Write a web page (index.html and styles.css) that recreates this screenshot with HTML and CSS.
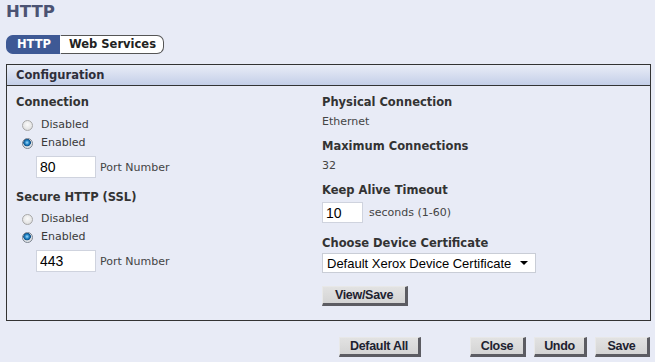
FILE: index.html
```html
<!DOCTYPE html>
<html>
<head>
<meta charset="utf-8">
<link rel="stylesheet" href="styles.css">
</head>
<body>
<h1 class="title">HTTP</h1>
<div class="tabs">
  <span class="tab tab-active">HTTP</span>
  <span class="tab tab-plain">Web Services</span>
</div>
<div class="panel">
  <div class="panel-head">Configuration</div>
  <div class="panel-body">
    <div class="col col-left">
      <div class="label">Connection</div>
      <div class="radios">
        <label class="radio-row"><input type="radio" name="c1" class="radio"><span>Disabled</span></label>
        <label class="radio-row"><input type="radio" name="c1" class="radio" checked><span>Enabled</span></label>
      </div>
      <div class="field-row"><input class="text-in port" type="text" value="80"><span class="hint">Port Number</span></div>
      <div class="label label-gap">Secure HTTP (SSL)</div>
      <div class="radios radios-2">
        <label class="radio-row"><input type="radio" name="c2" class="radio"><span>Disabled</span></label>
        <label class="radio-row"><input type="radio" name="c2" class="radio" checked><span>Enabled</span></label>
      </div>
      <div class="field-row"><input class="text-in port" type="text" value="443"><span class="hint">Port Number</span></div>
    </div>
    <div class="col col-right">
      <div class="label">Physical Connection</div>
      <div class="value">Ethernet</div>
      <div class="label label-r">Maximum Connections</div>
      <div class="value">32</div>
      <div class="label label-r">Keep Alive Timeout</div>
      <div class="field-row field-r"><input class="text-in secs" type="text" value="10"><span class="hint hint-r">seconds (1-60)</span></div>
      <div class="label label-r2">Choose Device Certificate</div>
      <div class="select-wrap">
        <select class="select"><option>Default Xerox Device Certificate</option></select>
        <svg class="arrow" width="8" height="4" viewBox="0 0 8 4"><path d="M0 0H8L4 4Z" fill="#000"/></svg>
      </div>
      <button class="btn btn-view">View/Save</button>
    </div>
  </div>
</div>
<div class="actions">
  <button class="btn btn-default">Default All</button>
  <div class="actions-right">
    <button class="btn btn-close">Close</button>
    <button class="btn btn-undo">Undo</button>
    <button class="btn btn-save">Save</button>
  </div>
</div>
</body>
</html>
```

FILE: styles.css
```css
html, body {
  margin: 0;
  padding: 0;
  background: #e8ebf6;
}
body {
  padding: 0 5px 0 6px;
  font-family: "DejaVu Sans", Verdana, sans-serif;
  font-size: 11px;
  color: #3a3a3a;
}
.title {
  margin: 0;
  padding-top: 1px;
  font-size: 16.5px;
  line-height: 22px;
  font-weight: bold;
  color: #4b5373;
}
.tabs {
  display: flex;
  margin-top: 12px;
  height: 19px;
}
.tab {
  font-weight: bold;
  font-size: 11.5px;
  line-height: 17px;
  border: 1px solid #3a3f55;
}
.tab-active {
  background: #3e5995;
  color: #fff;
  padding: 0 9px 0 10px;
  border-radius: 7px 0 0 7px;
  border-color: #3e5995;
  border-right: 1px solid #fff;
}
.tab-plain {
  background: #fff;
  color: #222;
  padding: 0 7px 0 8px;
  border-radius: 0 7px 7px 0;
  border-left: none;
  border-color: #555;
}
.panel {
  margin-top: 10px;
  width: 643px;
  border: 1px solid #333;
}
.panel-head {
  height: 20px;
  line-height: 20px;
  padding-left: 9px;
  font-weight: bold;
  font-size: 11.5px;
  color: #2e2e3a;
  background: linear-gradient(#e9edf7, #c4cfe8);
  border-bottom: 1px solid #333;
}
.panel-body {
  display: flex;
  height: 234px;
  box-sizing: border-box;
  padding: 9px 0 0 9px;
}
.col {
  display: flex;
  flex-direction: column;
  align-items: flex-start;
}
.col-left {
  width: 306px;
}
.label {
  font-weight: bold;
  font-size: 11.5px;
  line-height: 14px;
  color: #333;
}
.label-gap {
  margin-top: 12px;
}
.radios {
  margin-top: 7px;
  padding-left: 6px;
  display: flex;
  flex-direction: column;
}
.radios-2 {
  margin-top: 6px;
}
.radio-row {
  display: flex;
  align-items: center;
  height: 18px;
  line-height: 18px;
}
.radio {
  -webkit-appearance: none;
  appearance: none;
  margin: 0 8px 0 0;
  width: 11px;
  height: 11px;
  border-radius: 50%;
  border: 1px solid #a8a8a8;
  box-sizing: border-box;
  background: radial-gradient(circle at 50% 40%, #fafafa 0%, #e6e6e6 60%, #cfcfcf 100%);
}
.radio:checked {
  border-color: #7d8590;
  background: radial-gradient(circle at 45% 40%, #9fdcff 0%, #1d7fc0 30%, #0c4d86 48%, #d8dde2 55%, #f2f2f2 100%);
}
.field-row {
  display: flex;
  align-items: center;
  margin-top: 4px;
  padding-left: 20px;
}
.text-in {
  box-sizing: border-box;
  height: 22px;
  border: 1px solid #cfd3de;
  background: #fff;
  font-family: "Liberation Sans", Arial, sans-serif;
  font-size: 14px;
  color: #000;
  padding: 0 0 0 3px;
  margin: 0;
  outline: none;
}
.port {
  width: 60px;
}
.hint {
  margin-left: 4px;
  color: #444;
}
.value {
  line-height: 14px;
  margin-top: 6px;
  color: #444;
}
.label-r {
  margin-top: 10px;
}
.field-r {
  padding-left: 0;
  margin-top: 5px;
}
.secs {
  width: 41px;
  height: 21px;
}
.hint-r {
  margin-left: 6px;
}
.label-r2 {
  margin-top: 13px;
}
.select-wrap {
  position: relative;
  margin-top: 3px;
}
.select {
  -webkit-appearance: none;
  appearance: none;
  width: 214px;
  height: 20px;
  border: 1px solid #c9cdd6;
  background: #fff;
  font-family: "Liberation Sans", Arial, sans-serif;
  font-size: 13px;
  color: #000;
  padding: 0 0 0 4px;
  margin: 0;
  border-radius: 0;
  outline: none;
}
.arrow {
  position: absolute;
  right: 8px;
  top: 8px;
}
.btn {
  box-sizing: border-box;
  height: 20px;
  padding: 0;
  margin: 0;
  font-family: "Liberation Sans", Arial, sans-serif;
  font-size: 12.5px;
  font-weight: bold;
  color: #1e2230;
  background: linear-gradient(#e2e2e2, #d4d4d4);
  border-style: solid;
  border-width: 1px 3px 3px 1px;
  border-color: #e8e8e8 #5c5c62 #5c5c62 #e8e8e8;
  letter-spacing: -0.3px;
}
.btn-view {
  margin-top: 13px;
  width: 86px;
}
.actions {
  display: flex;
  align-items: center;
  margin-top: 16px;
  padding-left: 333px;
}
.actions-right {
  display: flex;
  gap: 8px;
  margin-left: 49px;
}
.btn-default {
  width: 82px;
}
.btn-close {
  width: 56px;
}
.btn-undo {
  width: 53px;
}
.btn-save {
  width: 55px;
}
```
